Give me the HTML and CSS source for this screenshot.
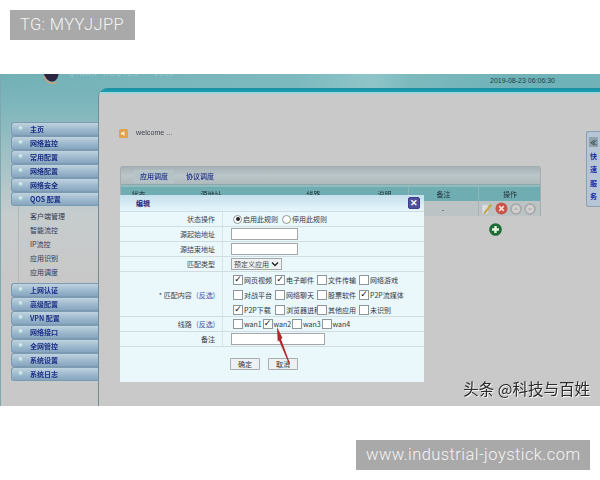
FILE: index.html
```html
<!DOCTYPE html>
<html lang="zh">
<head>
<meta charset="utf-8">
<title>QOS 配置</title>
<link rel="stylesheet" href="styles.css">
</head>
<body>
<div class="tag tag-top">TG: MYYJJPP</div>
<div class="shot">
  <div class="shot-inner">
    <header class="topbar">
      <svg class="logo" width="24" height="14" viewBox="0 0 24 14"><path d="M4 0C5 5 9 8 13 7.500C16 7 18 4 18.500 0Z" fill="#2a2540"/><path d="M4 2C6 8 12 11 17 8" fill="none" stroke="#c9a27e" stroke-width="1.500"/></svg>
      <span class="brand">Q-WAN  ROUTER  ·  2000</span>
      <span class="date">2019-08-23 06:06:30</span>
    </header>
    <div class="layout">
      <nav class="side">
        <a class="nav">主页</a>
        <a class="nav">网络监控</a>
        <a class="nav">常用配置</a>
        <a class="nav">网络配置</a>
        <a class="nav">网络安全</a>
        <a class="nav">QOS 配置</a>
        <div class="sub">
          <a>客户端管理</a>
          <a>智能流控</a>
          <a>IP流控</a>
          <a>应用识别</a>
          <a>应用调度</a>
        </div>
        <a class="nav">上网认证</a>
        <a class="nav">高级配置</a>
        <a class="nav">VPN 配置</a>
        <a class="nav">网络接口</a>
        <a class="nav">全网管控</a>
        <a class="nav">系统设置</a>
        <a class="nav">系统日志</a>
      </nav>
      <main class="main">
        <div class="band"></div>
        <div class="welcome">
          <svg width="9" height="9" viewBox="0 0 9 9"><rect width="9" height="9" rx="1.500" fill="#e2a24c"/><path d="M2 3.500H3.500L5.500 2V7L3.500 5.500H2Z" fill="#fbeed6"/></svg>
          <span>welcome ...</span>
        </div>
        <section class="panel">
          <div class="tabs"><span class="tab on">应用调度</span><span class="tab">协议调度</span></div>
          <div class="grid head">
            <span>状态</span><span>源地址</span><span>线路</span><span>说明</span><span>备注</span><span>操作</span>
          </div>
          <div class="grid row">
            <span></span><span></span><span></span><span></span><span>-</span>
            <span class="ops">
              <svg width="12" height="12" viewBox="0 0 12 12"><path d="M1 1.500H7V11H1Z" fill="#d9dde2" stroke="#b8c0c8" stroke-width=".5"/><path d="M3 10.500L10.500 1.500" stroke="#c9a63e" stroke-width="2"/></svg>
              <svg width="13" height="13" viewBox="0 0 13 13"><circle cx="6.500" cy="6.500" r="6" fill="#c8544a"/><path d="M4.200 4.200L8.800 8.800M8.800 4.200L4.200 8.800" stroke="#f3dcd5" stroke-width="1.700"/></svg>
              <svg width="12" height="12" viewBox="0 0 12 12"><circle cx="6" cy="6" r="5" fill="#d0d0d0" stroke="#a5a5a5" stroke-width="1.500"/><path d="M3.500 7L6 4L8.500 7" fill="#b9b9b9"/></svg>
              <svg width="12" height="12" viewBox="0 0 12 12"><circle cx="6" cy="6" r="5" fill="#d0d0d0" stroke="#a5a5a5" stroke-width="1.500"/><path d="M3.500 5L6 8L8.500 5" fill="#b9b9b9"/></svg>
            </span>
          </div>
        </section>
        <div class="add">
          <svg width="13" height="13" viewBox="0 0 13 13"><circle cx="6.500" cy="6.500" r="6.300" fill="#1f6b35"/><path d="M6.500 3V10M3 6.500H10" stroke="#e4f3e2" stroke-width="2.400"/></svg>
        </div>
      </main>
    </div>

    <aside class="quick">
      <span class="q-top">≪</span><span>快</span><span>速</span><span>服</span><span>务</span>
    </aside>

    <div class="modal">
      <div class="m-title">
        <span>编辑</span>
        <button class="close" type="button">✕</button>
      </div>
      <div class="m-row">
        <label>状态操作</label>
        <div class="m-val inset">
          <span class="radio on"></span><span class="opt">启用此规则</span>
          <span class="radio"></span><span class="opt">停用此规则</span>
        </div>
      </div>
      <div class="m-row"><label>源起始地址</label><div class="m-val"><input class="txt" type="text"></div></div>
      <div class="m-row"><label>源结束地址</label><div class="m-val"><input class="txt" type="text"></div></div>
      <div class="m-row">
        <label>匹配类型</label>
        <div class="m-val">
          <span class="sel">预定义应用<svg width="8" height="6" viewBox="0 0 8 6"><path d="M1 1.500L4 4.500L7 1.500" fill="none" stroke="#222" stroke-width="1.300"/></svg></span>
        </div>
      </div>
      <div class="m-row tall">
        <label>* 匹配内容 <em>(反选)</em></label>
        <div class="m-val inset checks">
          <span class="c on">网页视频</span><span class="c on">电子邮件</span><span class="c">文件传输</span><span class="c">网络游戏</span>
          <span class="c">对战平台</span><span class="c">网络聊天</span><span class="c">股票软件</span><span class="c on">P2P流媒体</span>
          <span class="c on">P2P下载</span><span class="c">浏览器进程</span><span class="c">其他应用</span><span class="c">未识别</span>
        </div>
      </div>
      <div class="m-row">
        <label>线路 <em>(反选)</em></label>
        <div class="m-val inset wans">
          <span class="c">wan1</span><span class="c on">wan2</span><span class="c">wan3</span><span class="c">wan4</span>
        </div>
      </div>
      <div class="m-row"><label>备注</label><div class="m-val"><input class="txt wide" type="text"></div></div>
      <div class="m-foot">
        <button class="btn" type="button">确定</button>
        <button class="btn" type="button">取消</button>
      </div>
      <svg class="arrow" width="20" height="40" viewBox="0 0 20 40"><path d="M2 1L7.500 12L6 13L15 37.500L14 38L4 14.500L2.700 15.500Z" fill="#b3262c"/></svg>
    </div>
    <div class="mark">头条 @科技与百姓</div>
  </div>
</div>
<div class="tag tag-bottom">www.industrial-joystick.com</div>
</body>
</html>
```
FILE: styles.css
```css
* { box-sizing: border-box; }
html, body { margin: 0; padding: 0; }
body {
  width: 600px;
  height: 480px;
  overflow: hidden;
  background: #fff;
  font-family: "Liberation Sans", "Noto Sans CJK SC", sans-serif;
  display: flex;
  flex-direction: column;
}
.tag {
  background: #a9a9a9;
  color: #f4f4f4;
  height: 30px;
  line-height: 30px;
  font-family: Roboto, "Liberation Sans", sans-serif;
  font-size: 16.500px;
  font-weight: 300;
}
.tag-top {
  align-self: flex-start;
  margin: 10px 0 0 10px;
  width: 125px;
  padding-left: 10px;
  white-space: nowrap;
  letter-spacing: .35px;
}
.tag-bottom {
  align-self: flex-end;
  margin: 34px 10px 0 0;
  width: 234px;
  padding-left: 10px;
  white-space: nowrap;
  letter-spacing: .44px;
}
.shot {
  margin-top: 34px;
  height: 332px;
  overflow: hidden;
  flex: none;
}
.shot-inner {
  position: relative;
  height: 332px;
  background: linear-gradient(180deg, #6fb0b6 0, #7db6bc 30px, #a5c2c6 90px, #c6cccd 140px, #c8c8c8 200px);
  font-size: 7px;
  filter: blur(.3px);
  font-family: "Noto Sans CJK SC", sans-serif;
  border-left: 1px solid #7fa7ae;
}
.topbar {
  height: 14px;
  display: flex;
  align-items: flex-start;
  position: relative;
  background: linear-gradient(90deg, transparent 0, #7dbabf 50%, #8fc5c9 62%, #7dbabe 68%, #6fb3b8 85%);
}
.logo { margin-left: 39px; flex: none; }
.brand {
  margin-left: 5px;
  margin-top: -4px;
  height: 10px;
  line-height: 8px;
  color: #a9d3d6;
  opacity: .7;
  font-size: 7px;
  letter-spacing: 1px;
  white-space: pre;
  font-family: "Liberation Sans", sans-serif;
}
.date {
  margin-left: auto;
  margin-right: 45px;
  margin-top: 1px;
  color: #1f3f48;
  font-size: 7px;
  line-height: 11px;
  font-family: "Liberation Sans", sans-serif;
  white-space: nowrap;
}
.layout { display: flex; height: 318px; }
.side {
  width: 97px;
  flex: none;
  padding: 34px 0 0 10px;
  display: flex;
  flex-direction: column;
}
.nav {
  height: 14px;
  line-height: 12px;
  padding-left: 18px;
  position: relative;
  color: #1c2f86;
  font-weight: 700;
  font-size: 7px;
  white-space: nowrap;
  border: 1px solid #7c9ab2;
  border-right: 0;
  border-radius: 3px 0 0 3px;
  background: linear-gradient(180deg, #c0d3df 0, #a3bdd0 45%, #86a5bf 100%);
}
.nav::before {
  content: "";
  position: absolute;
  left: 6px;
  top: 3px;
  width: 5px;
  height: 5px;
  border-radius: 50%;
  background: radial-gradient(circle at 50% 30%, #e8f3f5, #77b0b9);
}
.sub {
  height: 77px;
  margin-left: 7px;
  padding: 3px 0 0 11px;
  border-left: 1px solid #b3b8ba;
  display: flex;
  flex-direction: column;
}
.sub a {
  height: 14px;
  line-height: 14px;
  color: #33384e;
  font-size: 7px;
}
.main {
  flex: 1;
  position: relative;
  background: #c9c9c9;
  border-left: 1px solid #6f8d98;
  border-top-left-radius: 9px;
  padding: 0 0 0 21px;
  overflow: hidden;
}
.band {
  height: 6px;
  margin-left: -21px;
  background: linear-gradient(180deg, #1e8ea3 0, #1c9fb0 65%, #9bd3d8 66%, #a8d6da 100%);
  background-size: 100% 100%;
}
.welcome {
  height: 12px;
  margin: 33px 0 0 -1px;
  display: flex;
  align-items: center;
  gap: 8px;
  color: #3f464e;
  font: 7.200px/12px "Liberation Sans", sans-serif;
}
.panel {
  width: 421px;
  margin-top: 27px;
  border-radius: 3px 3px 0 0;
  border: 1px solid #a5adb0;
  border-bottom: 0;
}
.tabs {
  height: 18px;
  padding: 3px 0 0 13px;
  display: flex;
  gap: 6px;
  background: linear-gradient(180deg, #a6b2b6 0, #bcc6c9 50%, #aebabd 100%);
  border-bottom: 1px solid #8fa6ab;
}
.tab {
  width: 40px;
  text-align: center;
  height: 13px;
  line-height: 13px;
  color: #1f2e8a;
  font-weight: 500;
  font-size: 7px;
}
.tab.on { background: #b4c3c8; }
.grid {
  display: grid;
  grid-template-columns: 35px 110px 95px 47px 70px 63px;
  text-align: center;
  align-items: center;
  color: #22333b;
}
.head {
  height: 16px;
  background: #70adb2;
  font-size: 7px;
  border-top: 2px solid #8fbcc0;
}
.head span:last-child, .head span:nth-child(5) { border-left: 1px solid #8fb7ba; height: 14px; line-height: 14px; }
.row {
  height: 15px;
  background: #bcc3c5;
  font-size: 7px;
}
.ops {
  display: flex;
  align-items: center;
  gap: 2px;
  padding-left: 2px;
  height: 15px;
  border-left: 1px solid #a8b1b3;
}
.add { width: 421px; padding: 7px 0 0 369px; line-height: 0; }
.quick {
  position: absolute;
  right: 0;
  top: 57px;
  width: 14px;
  height: 76px;
  background: #b6c6d6;
  border: 1px solid #8aa0b2;
  border-right: 0;
  border-radius: 3px 0 0 3px;
  display: flex;
  flex-direction: column;
  align-items: center;
  justify-content: space-between;
  padding: 5px 0 5px;
  color: #1d2fa8;
  font-size: 7px;
  line-height: 10px;
  font-weight: 700;
}
.q-top { background: #8fa3ad; color: #26384a; width: 9px; text-align: center; }
.modal {
  position: absolute;
  left: 119px;
  top: 121px;
  width: 304px;
  height: 187px;
  background: #eaf7fb;
  color: #33393f;
  font-size: 7px;
}
.m-title {
  height: 16px;
  display: flex;
  align-items: center;
  justify-content: space-between;
  padding: 0 4px 0 16px;
  background: linear-gradient(180deg, #c5e0ec 0, #e6f5fb 100%);
  color: #1c2a80;
  font-weight: 700;
}
.close {
  width: 12px;
  height: 12px;
  padding: 0;
  border: 1px solid #3e3f86;
  border-radius: 2px;
  background: #4f4f9b;
  color: #fff;
  font: 700 9px/10px "Liberation Sans", sans-serif;
}
.m-row {
  display: grid;
  grid-template-columns: 103px 1fr;
  height: 15px;
  border-top: 1px solid #cfdde0;
  align-items: center;
}
.m-row.tall { height: 45px; }
.m-row > label {
  height: 100%;
  display: flex;
  align-items: center;
  justify-content: flex-end;
  gap: 3px;
  padding-right: 7px;
  border-right: 1px solid #d8e5e8;
  white-space: pre;
  color: #3d4348;
}
.m-row em { font-style: normal; color: #3f4fa8; }
.m-val {
  padding-left: 8px;
  display: flex;
  align-items: center;
  min-width: 0;
}
.m-val.inset { padding-left: 10px; }
.radio {
  width: 9px;
  height: 9px;
  border-radius: 50%;
  border: 1px solid #8f9699;
  background: #fff;
  position: relative;
  flex: none;
}
.radio.on::after {
  content: "";
  position: absolute;
  left: 1.500px;
  top: 1.500px;
  width: 4px;
  height: 4px;
  border-radius: 50%;
  background: #222;
}
.opt { margin: 0 4px 0 1px; white-space: nowrap; }
.txt {
  width: 67px;
  height: 12px;
  padding: 0;
  margin: 0;
  border: 1px solid #a3a7a8;
  background: #fff;
}
.txt.wide { width: 94px; }
.sel {
  width: 51px;
  height: 12px;
  display: flex;
  align-items: center;
  justify-content: space-between;
  padding: 0 2px 0 2px;
  border: 1px solid #a3a7a8;
  background: #eef2f3;
  color: #45494d;
  white-space: nowrap;
}
.checks {
  display: grid;
  grid-template-columns: repeat(4, 42px);
  grid-auto-rows: 15px;
  white-space: nowrap;
}
.wans {
  display: grid;
  grid-template-columns: repeat(4, 29.500px);
}
.c {
  display: flex;
  align-items: center;
  gap: 1px;
  color: #33393f;
  white-space: nowrap;
}
.c::before {
  content: "";
  flex: none;
  width: 8px;
  height: 8px;
  border: 1px solid #8f9699;
  background: #fff;
  color: #111;
  font: 700 9px/7px "DejaVu Sans", sans-serif;
  text-align: center;
}
.c.on::before { content: "✓"; }
.m-foot {
  border-top: 1px solid #cfdde0;
  padding: 11px 0 0 110px;
  display: flex;
  gap: 8px;
}
.btn {
  width: 30px;
  height: 12px;
  padding: 0;
  border: 1px solid #a7adaf;
  border-radius: 1px;
  background: #eef1f1;
  color: #33383c;
  font: 7px/10px "Noto Sans CJK SC", sans-serif;
}
.arrow { position: absolute; left: 155px; top: 131px; }
.mark {
  position: absolute;
  right: 10px;
  bottom: 9px;
  color: #2a2a2a;
  font-size: 15.500px;
  line-height: 18px;
  text-shadow: 1px 1px 0 #f4f4f4;
  white-space: nowrap;
}
```
